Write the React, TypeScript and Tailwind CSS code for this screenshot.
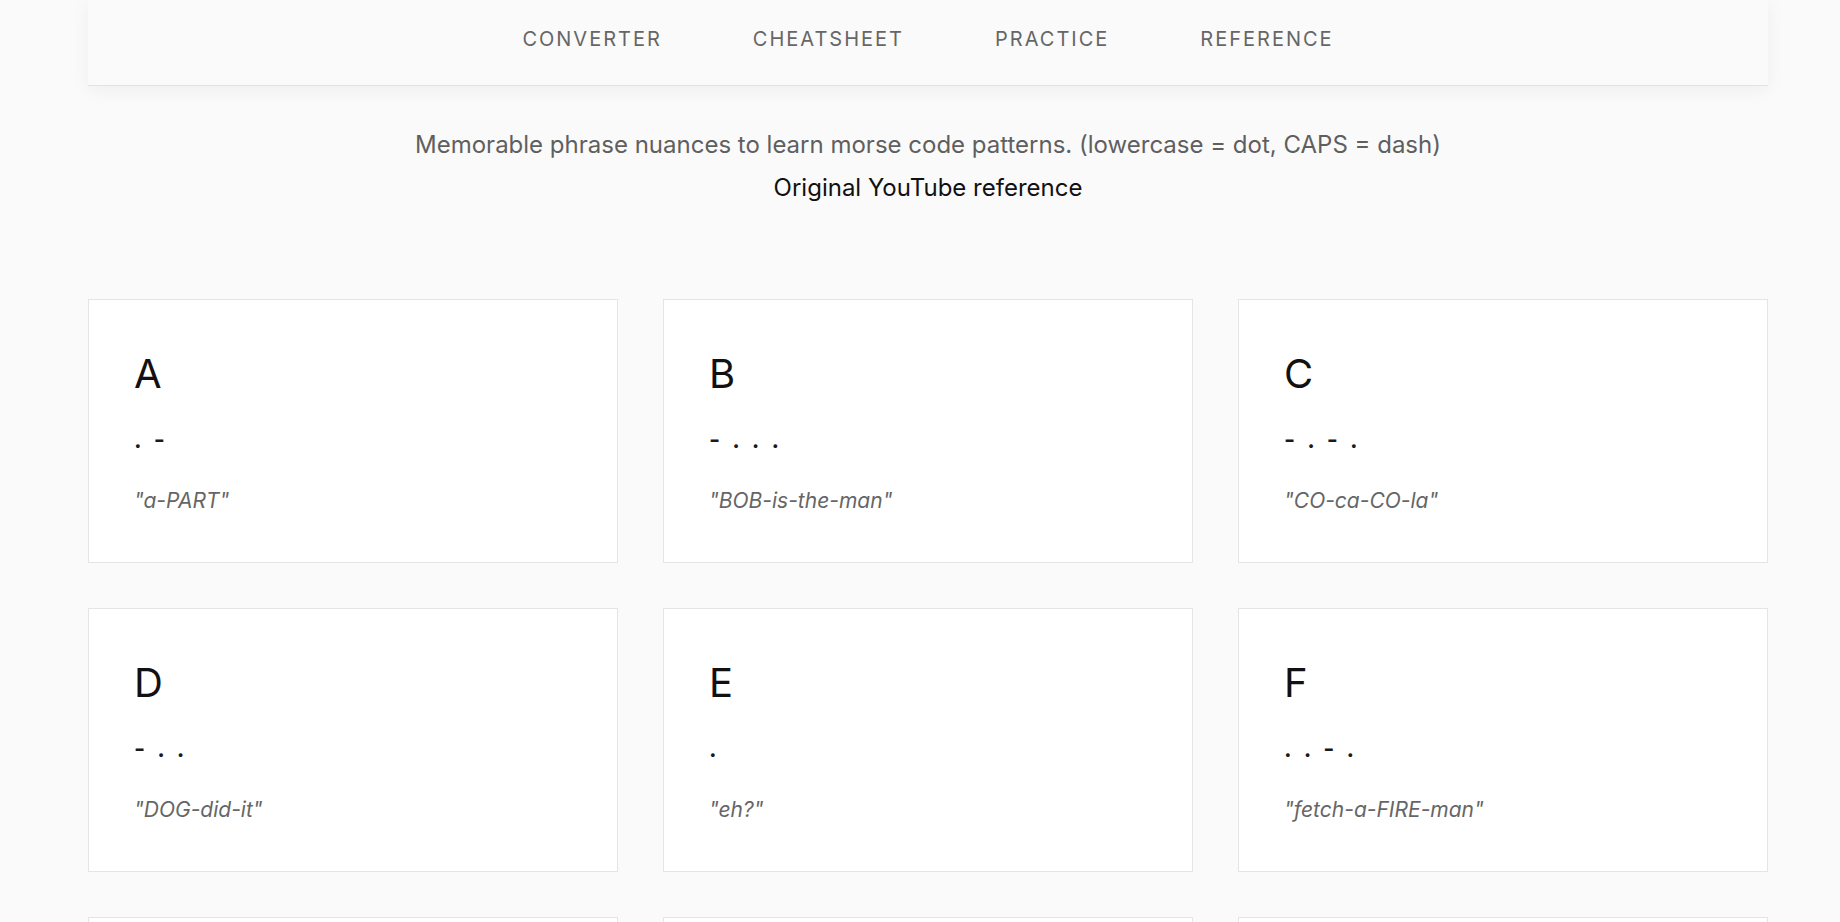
const navItems = ["CONVERTER", "CHEATSHEET", "PRACTICE", "REFERENCE"];

const letters = [
    { letter: "A", code: ".-", phrase: "a-PART" },
    { letter: "B", code: "-...", phrase: "BOB-is-the-man" },
    { letter: "C", code: "-.-.", phrase: "CO-ca-CO-la" },
    { letter: "D", code: "-..", phrase: "DOG-did-it" },
    { letter: "E", code: ".", phrase: "eh?" },
    { letter: "F", code: "..-.", phrase: "fetch-a-FIRE-man" },
    { letter: "G", code: "--.", phrase: "GOOD-GRAV-y" },
    { letter: "H", code: "....", phrase: "hip-pi-ty-hop" },
    { letter: "I", code: "..", phrase: "i-vy" },
];

function LetterCard({ letter, code, phrase }: { letter: string; code: string; phrase: string }) {
    return (
        <div className="h-[264px] bg-white border border-[#e5e5e5] pl-[45px] pt-[54px]">
            <div className="text-[40px] leading-[40px] text-[#111]">{letter}</div>
            <div className="mt-[34px] text-[24px] leading-[24px] font-semibold tracking-[0.5em] text-[#1a1a1a]">{code}</div>
            <div className="mt-[38px] text-[21px] leading-[21px] italic text-[#666]">"{phrase}"</div>
        </div>
    );
}

export default function App() {
    return (
        <div className="min-h-screen bg-[#fafafa] font-['Inter',sans-serif]">
            <div className="ml-[88px] w-[1680px]">
                <nav className="h-[86px] pb-[8px] flex items-center justify-center gap-[91px] bg-[#fafafa] border-b border-[#e2e2e2] shadow-[0_4px_18px_rgba(0,0,0,0.05)]">
                    {navItems.map((item) => (
                        <a key={item} href="#" className="text-[20px] tracking-[0.1em] text-[#666]">
                            {item}
                        </a>
                    ))}
                </nav>

                <div className="mt-[44px] flex flex-col items-center">
                    <p className="text-[24px] leading-[30px] text-[#5f5f5f]">
                        Memorable phrase nuances to learn morse code patterns. (lowercase = dot, CAPS = dash)
                    </p>
                    <a href="#" className="mt-[13px] text-[24px] leading-[30px] text-[#111]">
                        Original YouTube reference
                    </a>
                </div>

                <div className="mt-[96px] grid grid-cols-3 gap-[45px]">
                    {letters.map((l) => (
                        <LetterCard key={l.letter} {...l} />
                    ))}
                </div>
            </div>
        </div>
    );
}
